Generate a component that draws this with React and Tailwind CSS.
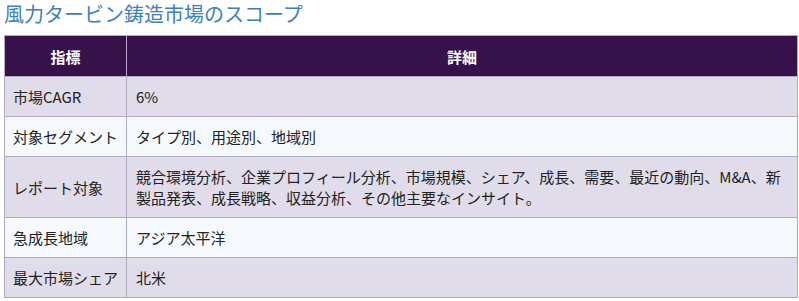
const rows = [
  ['市場CAGR', '6%'],
  ['対象セグメント', 'タイプ別、用途別、地域別'],
  [
    'レポート対象',
    '競合環境分析、企業プロフィール分析、市場規模、シェア、成長、需要、最近の動向、M&A、新製品発表、成長戦略、収益分析、その他主要なインサイト。',
  ],
  ['急成長地域', 'アジア太平洋'],
  ['最大市場シェア', '北米'],
]

const App = () => {
  return (
    <div className="bg-white w-[799px] h-[301px] pl-[4px] font-['Noto_Sans_CJK_JP','Noto_Sans',sans-serif]">
      {/* Title */}
      <h2 className="text-[20px] leading-[28px] text-[#3a80c0] font-normal h-[35px]">
        風力タービン鋳造市場のスコープ
      </h2>

      {/* Scope table */}
      <table className="w-[794px] border-collapse text-[15px] leading-[21px] text-[#222]">
        <thead>
          <tr className="bg-[#36114a] text-white h-[41px]">
            <th className="w-[122px] border border-[#b9a8cc] font-semibold text-center">指標</th>
            <th className="border border-[#b9a8cc] font-semibold text-center">詳細</th>
          </tr>
        </thead>
        <tbody>
          {rows.map(([label, detail], i) => (
            <tr
              key={label}
              className={i % 2 === 0 ? 'bg-[#e0dcea]' : 'bg-[#f5f9fd]'}
            >
              <td className="border border-[#b0abc2] px-[8px] py-[9px] align-middle">{label}</td>
              <td className="border border-[#b0abc2] px-[9px] py-[9px] align-middle">{detail}</td>
            </tr>
          ))}
        </tbody>
      </table>
    </div>
  )
}

export default App
